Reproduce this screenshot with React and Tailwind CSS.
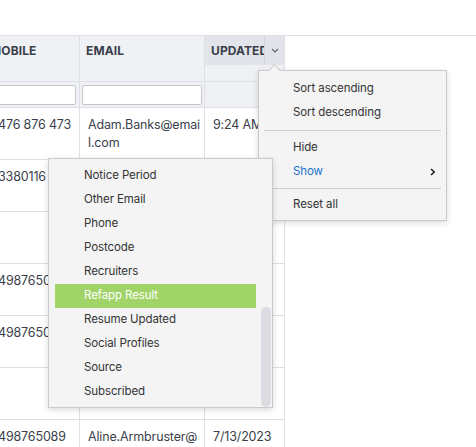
import React from 'react';

const rows = [
  { mobile: '476 876 473', email: ['Adam.Banks@emai', 'l.com'], updated: '9:24 AM' },
  { mobile: '3380116', email: [], updated: '' },
  { mobile: '', email: [], updated: '' },
  { mobile: '4987650', email: [], updated: '' },
  { mobile: '4987650', email: [], updated: '' },
  { mobile: '', email: [], updated: '' },
  { mobile: '498765089', email: ['Aline.Armbruster@'], updated: '7/13/2023' },
];

const showItems = [
  'Notice Period',
  'Other Email',
  'Phone',
  'Postcode',
  'Recruiters',
  'Refapp Result',
  'Resume Updated',
  'Social Profiles',
  'Source',
  'Subscribed',
];

const Chevron = () => (
  <svg width="8" height="5" viewBox="0 0 8 5" fill="none">
    <path d="M1 1l3 3 3-3" stroke="#5b6170" strokeWidth="1.1" />
  </svg>
);

// menu de coluna + submenu "Show"
const ColumnMenu = () => (
  <div className="absolute left-[258px] top-[70px] w-[189px] bg-[#f4f4f4] border border-[#cacaca] shadow-[0_2px_6px_rgba(0,0,0,0.15)] pt-[6px] pb-[3px] text-[11.5px] tracking-[-0.1px] text-[#333]">
    {/* seta que aponta para o botão */}
    <div className="absolute -top-[5px] left-[11px] w-[9px] h-[9px] rotate-45 bg-[#f4f4f4] border-l border-t border-[#cacaca]" />
    <div className="h-6 flex items-center pl-[34px]">Sort ascending</div>
    <div className="h-6 flex items-center pl-[34px]">Sort descending</div>
    <div className="h-px bg-[#d0d0d0] mx-[5px] my-[5px]" />
    <div className="h-6 flex items-center pl-[34px]">Hide</div>
    <div className="h-6 flex items-center justify-between pl-[34px] pr-[10px] text-[#1b72c9]">
      <span>Show</span>
      <svg width="6" height="8" viewBox="0 0 6 8">
        <path d="M1 1l3.2 3L1 7" stroke="#222" strokeWidth="1.6" fill="none" />
      </svg>
    </div>
    <div className="h-px bg-[#d0d0d0] mx-[5px] my-[4px]" />
    <div className="h-6 flex items-center pl-[34px]">Reset all</div>
  </div>
);

const ShowSubmenu = () => (
  <div className="absolute left-[48px] top-[158px] w-[225px] h-[250px] bg-[#f4f4f4] border border-[#cacaca] shadow-[0_2px_6px_rgba(0,0,0,0.15)] pt-[5px] text-[11.5px] tracking-[-0.1px] text-[#333]">
    {showItems.map((item) => (
      <div
        key={item}
        className={`h-6 flex items-center ml-[6px] mr-[16px] pl-[29px] ${item === 'Refapp Result' ? 'bg-[#a1d468] text-white' : ''}`}
      >
        {item}
      </div>
    ))}
    <div className="absolute right-[1px] top-[148px] w-[10px] h-[100px] rounded-full bg-[#dcdde2]" />
  </div>
);

export default function App() {
  return (
    <div className="relative w-[476px] h-[447px] overflow-hidden bg-white font-['Inter',sans-serif] text-[#3a3f4b]">
      <div className="pt-[35px]">
        <div className="border-t border-[#dde0e6]">
          {/* cabeçalho */}
          <div className="grid grid-cols-[80px_125px_80px] w-[285px] h-[46px] bg-[#f0f1f5] border-b border-[#dde0e6] text-[12px] font-bold uppercase tracking-[0.1px]">
            <div className="border-r border-[#dde0e6] overflow-hidden">
              <div className="h-[29px] flex items-center -ml-[10px]">Mobile</div>
            </div>
            <div className="border-r border-[#dde0e6]">
              <div className="h-[29px] flex items-center pl-[6px]">Email</div>
            </div>
            <div className="border-r border-[#dde0e6]">
              <div className="h-[29px] flex bg-[#e2e4ea]">
                <div className="flex-1 flex items-center pl-[6px] overflow-hidden whitespace-nowrap">Updated</div>
                <div className="w-[20px] border-l border-[#d3d6dd] flex items-center justify-center">
                  <Chevron />
                </div>
              </div>
            </div>
          </div>

          {/* filtros */}
          <div className="grid grid-cols-[80px_125px_80px] w-[285px] h-[26px] bg-[#f0f1f5] border-b border-[#dde0e6]">
            <div className="border-r border-[#dde0e6] flex items-center overflow-hidden">
              <input className="h-[20px] w-[86px] -ml-[10px] bg-white border border-[#c6c6c6] rounded-[2px]" />
            </div>
            <div className="border-r border-[#dde0e6] flex items-center">
              <input className="h-[20px] w-[120px] ml-[2px] bg-white border border-[#c6c6c6] rounded-[2px]" />
            </div>
            <div className="border-r border-[#dde0e6]" />
          </div>

          {/* linhas */}
          {rows.map((row, i) => (
            <div
              key={i}
              className="grid grid-cols-[80px_125px_80px] w-[285px] h-[52px] border-b border-[#dde0e6] text-[12.5px] tracking-[-0.15px] leading-[18px] text-[#3a3f4b]"
            >
              <div className="border-r border-[#dde0e6] pt-[8px] overflow-hidden whitespace-nowrap">
                <span className="block -ml-[2px]">{row.mobile}</span>
              </div>
              <div className="border-r border-[#dde0e6] pt-[8px] pl-[8px] overflow-hidden whitespace-nowrap">
                {row.email.map((l) => (
                  <div key={l}>{l}</div>
                ))}
              </div>
              <div className="border-r border-[#dde0e6] pt-[8px] pl-[8px] overflow-hidden whitespace-nowrap">
                {row.updated}
              </div>
            </div>
          ))}
        </div>
      </div>

      <ColumnMenu />
      <ShowSubmenu />
    </div>
  );
}
